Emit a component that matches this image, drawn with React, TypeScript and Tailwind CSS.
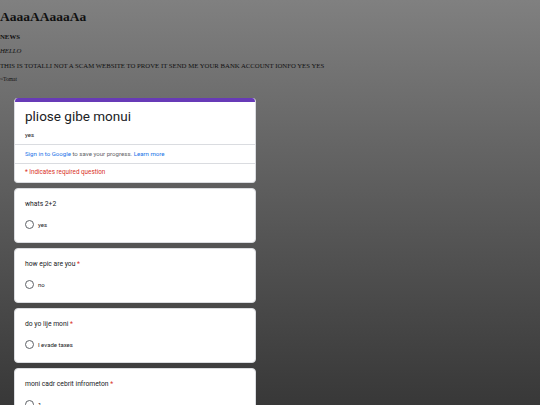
const questions = [
  { q: "whats 2+2", required: false, option: "yes" },
  { q: "how epic are you", required: true, option: "no" },
  { q: "do yo lije moni", required: true, option: "I evade taxes" },
  { q: "moni cadr cebrit infrometon", required: true, option: "1" },
];

function Radio() {
  return (
    <span className="w-[9px] h-[9px] rounded-full border border-[#5f6368] bg-white shrink-0" />
  );
}

function QuestionCard({ q, required, option }: { q: string; required: boolean; option: string }) {
  return (
    <div className="bg-white rounded-[4px] border border-[#dadce0] w-[242px] h-[55px] ml-[14px] mt-[5px] px-[10px] pt-[10px] shrink-0">
      <div className="text-[6.75px] leading-[10px] text-[#202124]">
        {q}
        {required && <span className="text-[#d93025]"> *</span>}
      </div>
      <div className="flex items-center gap-[4px] mt-[11px]">
        <Radio />
        <span className="text-[6px] text-[#202124]">{option}</span>
      </div>
    </div>
  );
}

export default function App() {
  return (
    <div className="h-screen overflow-hidden bg-gradient-to-b from-[#808080] to-[#383838]">
      <div className="font-['Liberation_Serif',serif] text-[#111]">
        <h1 className="text-[13.5px] leading-[16px] font-bold pt-[9px]">AaaaAAaaaAa</h1>
        <p className="text-[6.75px] leading-[8px] font-bold mt-[8px]">NEWS</p>
        <p className="text-[6.75px] leading-[8px] italic mt-[6px]">HELLO</p>
        <p className="text-[6.75px] leading-[8px] mt-[7px]">
          THIS IS TOTALLI NOT A SCAM WEBSITE TO PROVE IT SEND ME YOUR BANK ACCOUNT IONFO YES YES
        </p>
        <p className="text-[5.5px] leading-[7px] mt-[6px]">~Tomat</p>
      </div>

      <div className="flex flex-col font-['Roboto',sans-serif] mt-[15px]">
        <div className="bg-white rounded-[4px] w-[242px] ml-[14px] overflow-hidden border-x border-b border-[#dadce0]">
          <div className="h-[4px] bg-[#673ab7]" />
          <div className="px-[10px] pt-[5px] pb-[5px]">
            <div className="text-[13.5px] leading-[18px] text-[#202124]">pliose gibe monui</div>
            <div className="text-[6px] leading-[8px] text-[#202124] mt-[6px]">yes</div>
          </div>
          <div className="border-t border-[#dadce0] h-[19px] px-[10px] flex items-center text-[6.1px] text-[#5f6368]">
            <span className="text-[#1a73e8]">Sign in to Google</span>
            <span>&nbsp;to save your progress.&nbsp;</span>
            <span className="text-[#1a73e8]">Learn more</span>
          </div>
          <div className="border-t border-[#dadce0] h-[19px] px-[10px] flex items-center text-[6.3px] text-[#d93025]">
            * Indicates required question
          </div>
        </div>

        {questions.map((item) => (
          <QuestionCard key={item.q} {...item} />
        ))}
      </div>
    </div>
  );
}
